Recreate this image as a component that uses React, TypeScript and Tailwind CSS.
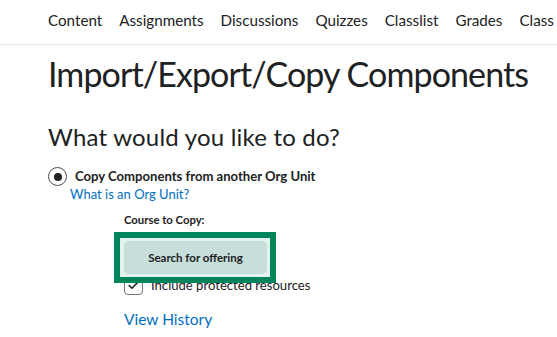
import { Check } from 'lucide-react';

const NAV_ITEMS = ['Content', 'Assignments', 'Discussions', 'Quizzes', 'Classlist', 'Grades', 'Class Progress'];

export default function App() {
  return (
    <div className="w-[557px] h-[337px] overflow-hidden bg-white font-['Lato',sans-serif] text-[#202122]">
      <nav className="h-[45px] border-b border-[#e6e6e6] pl-[48px] pb-[3px] flex items-center gap-[17px] whitespace-nowrap text-[15.2px] overflow-hidden">
        {NAV_ITEMS.map((item) => (
          <span key={item}>{item}</span>
        ))}
      </nav>
      <main className="pl-[48px] pt-[9px]">
        <h1 className="text-[34px] leading-[40px] font-normal tracking-[-0.9px] whitespace-nowrap">
          Import/Export/Copy Components
        </h1>
        <h2 className="mt-[28px] text-[24px] leading-[30px] font-normal tracking-[0.2px]">What would you like to do?</h2>
        <div className="mt-[15px] h-[19px] flex items-center gap-[8px]">
          <span className="w-[19px] h-[19px] rounded-full border-[1.5px] border-[#494c4e] flex items-center justify-center">
            <span className="w-[8px] h-[8px] rounded-full bg-[#202122]" />
          </span>
          <span className="text-[13.1px] font-bold">Copy Components from another Org Unit</span>
        </div>
        <a className="block ml-[22px] text-[13px] leading-[16px] text-[#006fbf]">What is an Org Unit?</a>
        <div className="ml-[76px] mt-[11px]">
          <div className="text-[11.3px] font-bold leading-[14px]">Course to Copy:</div>
          <div className="relative mt-[5px] h-[63px]">
            <div className="absolute left-[-10px] top-0 w-[162px] h-[51px] border-[6px] border-[#00845b] bg-[#e4f2ee] pl-[4px] pr-[3px] py-[3px] z-10">
              <button className="w-full h-full rounded-[5px] bg-[#c8dedb] text-[11.5px] font-bold text-[#202122]">
                Search for offering
              </button>
            </div>
            <div className="absolute left-0 top-[44px] flex items-center gap-[8px]">
              <span className="w-[19px] h-[19px] rounded-[4px] border border-[#6e7376] flex items-center justify-center">
                <Check className="w-[13px] h-[13px]" strokeWidth={3} />
              </span>
              <span className="text-[13.1px] text-[#202122]">Include protected resources</span>
            </div>
          </div>
          <a className="block mt-[14px] text-[15.5px] leading-[20px] text-[#006fbf]">View History</a>
        </div>
      </main>
    </div>
  );
}
